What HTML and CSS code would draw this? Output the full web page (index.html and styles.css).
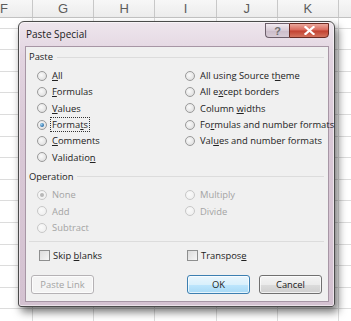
FILE: index.html
```html
<!DOCTYPE html>
<html>
<head>
<meta charset="utf-8">
<link rel="stylesheet" href="styles.css">
</head>
<body>
<div class="sheet">
  <div class="colhead">
    <div class="col first">F</div>
    <div class="col">G</div>
    <div class="col">H</div>
    <div class="col">I</div>
    <div class="col">J</div>
    <div class="col">K</div>
    <div class="col rest"></div>
  </div>
  <div class="grid"></div>

  <div class="dialog">
    <div class="titlebar">
      <span class="title">Paste Special</span>
      <div class="caption-btns">
        <div class="cbtn help">?</div>
        <div class="cbtn close">
          <svg width="11" height="9" viewBox="0 0 11 9"><path d="M1.5 1 L9.5 8 M9.5 1 L1.5 8" stroke="#fff" stroke-width="2.2" stroke-linecap="square"/></svg>
        </div>
      </div>
    </div>
    <div class="panel">
      <div class="group-label"><span>Paste</span></div>
      <div class="options paste-opts">
        <div class="opt"><span class="radio"></span><span><u>A</u>ll</span></div>
        <div class="opt"><span class="radio"></span><span>All using Source t<u>h</u>eme</span></div>
        <div class="opt"><span class="radio"></span><span><u>F</u>ormulas</span></div>
        <div class="opt"><span class="radio"></span><span>All e<u>x</u>cept borders</span></div>
        <div class="opt"><span class="radio"></span><span><u>V</u>alues</span></div>
        <div class="opt"><span class="radio"></span><span>Column <u>w</u>idths</span></div>
        <div class="opt"><span class="radio checked"></span><span class="focus">Forma<u>t</u>s</span></div>
        <div class="opt"><span class="radio"></span><span>Fo<u>r</u>mulas and number formats</span></div>
        <div class="opt"><span class="radio"></span><span><u>C</u>omments</span></div>
        <div class="opt"><span class="radio"></span><span>Val<u>u</u>es and number formats</span></div>
        <div class="opt"><span class="radio"></span><span>Validatio<u>n</u></span></div>
      </div>
      <div class="group-label op-label"><span>Operation</span></div>
      <div class="options op-opts disabled">
        <div class="opt"><span class="radio checked"></span><span>None</span></div>
        <div class="opt"><span class="radio"></span><span>Multiply</span></div>
        <div class="opt"><span class="radio"></span><span>Add</span></div>
        <div class="opt"><span class="radio"></span><span>Divide</span></div>
        <div class="opt"><span class="radio"></span><span>Subtract</span></div>
      </div>
      <div class="sep"></div>
      <div class="options checks">
        <div class="opt"><span class="check"></span><span>Skip <u>b</u>lanks</span></div>
        <div class="opt"><span class="check"></span><span>Transpos<u>e</u></span></div>
      </div>
      <div class="buttons">
        <div class="btn disabled-btn">Paste Link</div>
        <div class="btn-right">
          <div class="btn default">OK</div>
          <div class="btn">Cancel</div>
        </div>
      </div>
    </div>
  </div>
</div>
</body>
</html>
```

FILE: styles.css
```css
* { box-sizing: border-box; }
html, body {
  margin: 0;
  padding: 0;
  background: #fff;
  width: 351px;
  height: 321px;
  overflow: hidden;
}
body {
  font-family: "Open Sans", "Noto Sans", sans-serif;
  font-size: 9.4px;
  color: #222;
}
.sheet {
  position: relative;
  width: 351px;
  height: 321px;
  overflow: hidden;
}
.colhead {
  display: flex;
  height: 18px;
  background: linear-gradient(#f7f7f7, #ececec);
  border-bottom: 1px solid #c2c2c2;
}
.col {
  flex: 0 0 61.2px;
  border-right: 1px solid #c8c8c8;
  text-align: center;
  font-family: "Liberation Sans", Arial, sans-serif;
  font-size: 13px;
  line-height: 18px;
  color: #5c5c5c;
}
.col.first {
  flex: 0 0 33px;
  text-align: left;
}
.col.rest {
  flex: 1 1 0;
  min-width: 0;
  border-right: none;
}
.grid {
  height: 303px;
  background:
    linear-gradient(90deg, transparent 32px, #dcdcdc 32px, #dcdcdc 33px, transparent 33px),
    linear-gradient(90deg, transparent 93px, #dcdcdc 93px, #dcdcdc 94px, transparent 94px),
    linear-gradient(90deg, transparent 154px, #dcdcdc 154px, #dcdcdc 155px, transparent 155px),
    linear-gradient(90deg, transparent 216px, #dcdcdc 216px, #dcdcdc 217px, transparent 217px),
    linear-gradient(90deg, transparent 277px, #dcdcdc 277px, #dcdcdc 278px, transparent 278px),
    linear-gradient(90deg, transparent 338px, #dcdcdc 338px, #dcdcdc 339px, transparent 339px),
    repeating-linear-gradient(180deg, transparent 0, transparent 9.6px, #dcdcdc 9.6px, #dcdcdc 10.6px, transparent 10.6px, transparent 21.6px);
}

.dialog {
  position: absolute;
  left: 18px;
  top: 21px;
  width: 317px;
  height: 286px;
  border: 1px solid #4b4b4b;
  border-radius: 6px 6px 3px 3px;
  background: linear-gradient(180deg, #eee6ed 0, #e2d4e0 12%, #d9c8d6 40%, #d4c2d1 100%);
  box-shadow: 3px 5px 8px rgba(0,0,0,0.55), inset 0 0 0 1px rgba(255,255,255,0.55);
  display: flex;
  flex-direction: column;
  padding: 0 5px 4px 6px;
}
.titlebar {
  height: 24px;
  display: flex;
  justify-content: space-between;
  align-items: flex-start;
}
.title {
  margin-top: 5px;
  padding-left: 1px;
  font-size: 10px;
  color: #1b1b1b;
}
.caption-btns {
  display: flex;
  margin-top: 1px;
}
.cbtn {
  height: 15px;
  border: 1px solid #6d5f6b;
  display: flex;
  align-items: center;
  justify-content: center;
}
.help {
  width: 24px;
  border-right: none;
  border-radius: 0 0 0 4px;
  background: linear-gradient(#f1eaf0, #d7cad5 50%, #cbbcc9 51%, #d8ccd6);
  color: #6f6f6f;
  font-family: "Liberation Sans", Arial, sans-serif;
  font-size: 11px;
  font-weight: bold;
}
.close {
  width: 40px;
  border-radius: 0 0 4px 0;
  border-color: #6a2a22;
  background: linear-gradient(#eaa79c, #d9685a 48%, #c2402e 52%, #d4735e);
}
.panel {
  flex: 1;
  background: #f0f0f0;
  border: 1px solid #a796a5;
  padding: 3px 4px 0 3px;
  display: flex;
  flex-direction: column;
}
.group-label {
  display: flex;
  align-items: center;
  height: 14px;
  line-height: 14px;
}
.group-label::after {
  content: "";
  flex: 1;
  height: 1px;
  background: #dcdcdc;
  margin-left: 4px;
}
.options {
  display: grid;
  grid-template-columns: 148px 140px;
  grid-auto-rows: 16.3px;
  padding-left: 8px;
  margin-top: 3.5px;
}
.opt {
  display: flex;
  align-items: center;
  white-space: nowrap;
}
.radio {
  width: 10px;
  height: 10px;
  border-radius: 50%;
  border: 1px solid #9a9a9a;
  background: radial-gradient(circle at 40% 40%, #fafafa 0, #e6e6e6 60%, #d2d2d2 100%);
  margin-right: 5px;
  flex: none;
  position: relative;
}
.radio.checked::after {
  content: "";
  position: absolute;
  left: 2px;
  top: 2px;
  width: 4px;
  height: 4px;
  border-radius: 50%;
  background: radial-gradient(circle at 35% 35%, #9fd3f2, #2a6ea8 70%, #1d4f86);
}
.focus {
  outline: 1px dotted #333;
  outline-offset: 0;
  padding: 0 1px;
  margin-left: -1px;
  line-height: 13px;
}
.op-label { margin-top: 4.5px; }
.op-opts { margin-top: 3px; }
.disabled { color: #a4a4a4; }
.disabled .radio {
  border-color: #c8c8c8;
  background: radial-gradient(circle at 40% 40%, #fafafa, #ececec);
}
.disabled .radio.checked::after {
  background: #b8b8b8;
}
.sep {
  height: 1px;
  background: #dcdcdc;
  margin: 5px 0 0 0;
}
.checks {
  margin-top: 6px;
  grid-auto-rows: 16px;
}
.check {
  width: 11px;
  height: 11px;
  border: 1px solid #8e8f8f;
  background: linear-gradient(135deg, #dcdcdc, #f6f6f6);
  margin: 0 3px 0 2px;
  flex: none;
}
.buttons {
  display: flex;
  justify-content: space-between;
  margin-top: 11px;
  padding-left: 2px;
  padding-right: 2px;
}
.btn-right {
  display: flex;
  gap: 9px;
}
.btn {
  width: 63px;
  height: 19px;
  border: 1px solid #707070;
  border-radius: 3px;
  background: linear-gradient(#f4f4f4 0, #ebebeb 50%, #dcdcdc 51%, #cfcfcf 100%);
  box-shadow: inset 0 0 0 1px rgba(255,255,255,0.7);
  display: flex;
  align-items: center;
  justify-content: center;
  color: #1b1b1b;
}
.btn.default {
  border-color: #3c7fb1;
  background: linear-gradient(#eaf6fd 0, #d9f0fc 50%, #bee6fd 51%, #a7d9f5 100%);
}
.btn.disabled-btn {
  border-color: #b5b2b5;
  background: #f4f4f4;
  color: #a3a3a3;
}
```
